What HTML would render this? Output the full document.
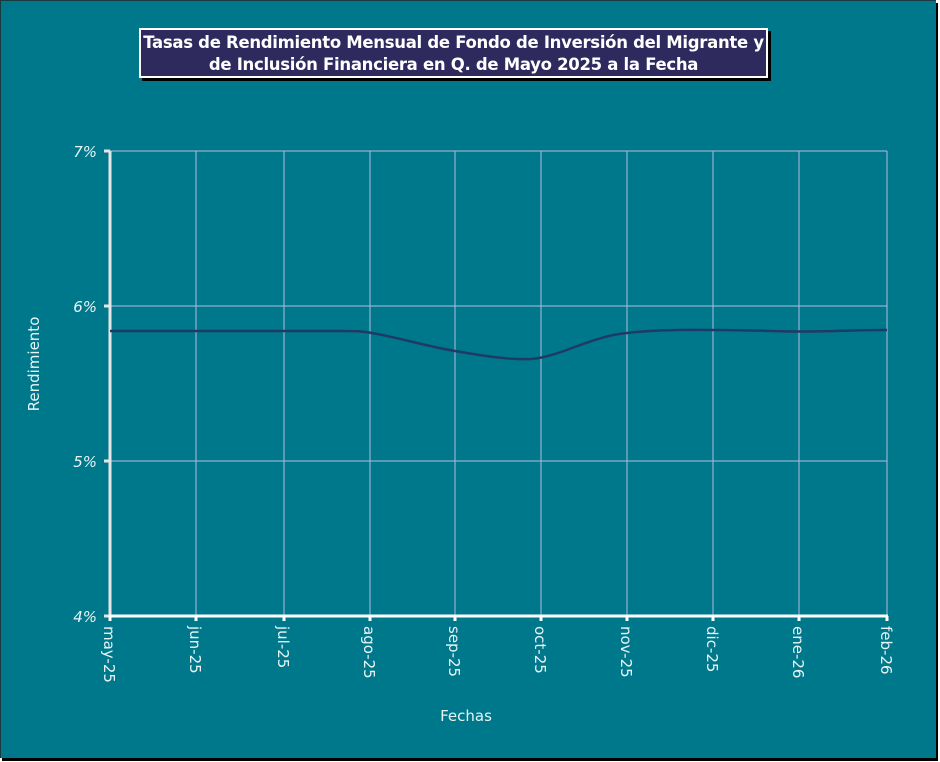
<!DOCTYPE html>
<html><head><meta charset="utf-8"><style>
html,body{margin:0;padding:0;width:940px;height:762px;overflow:hidden;background:#fff}
.frame{position:absolute;left:0;top:0;width:936px;height:758px;background:#00788c;border-left:1px solid #1a3a40;border-top:1px solid #1a3a40;box-sizing:border-box;box-shadow:2px 3px 0 #000}
.title{position:absolute;left:139px;top:28px;width:629px;height:50px;box-sizing:border-box;border:2px solid #fff;background:#2e2a5e;color:#fff;font-family:"DejaVu Sans","Liberation Sans",sans-serif;font-weight:bold;font-size:16.5px;line-height:22px;text-align:center;padding-top:2px;box-shadow:3px 3px 0 #000;letter-spacing:-0.3px}
svg{position:absolute;left:0;top:0}
</style></head><body>
<div class="frame"></div>
<div class="title">Tasas de Rendimiento Mensual de Fondo de Inversión del Migrante y<br>de Inclusión Financiera en Q. de Mayo 2025 a la Fecha</div>
<svg width="940" height="762" font-family="DejaVu Sans, Liberation Sans, sans-serif">
<g stroke="#b0bce4" stroke-width="1">
<line x1="110" y1="151" x2="887" y2="151"/><line x1="110" y1="306" x2="887" y2="306"/><line x1="110" y1="461" x2="887" y2="461"/>
<line x1="196" y1="151" x2="196" y2="616"/><line x1="284" y1="151" x2="284" y2="616"/><line x1="370" y1="151" x2="370" y2="616"/><line x1="455" y1="151" x2="455" y2="616"/><line x1="541" y1="151" x2="541" y2="616"/><line x1="627" y1="151" x2="627" y2="616"/><line x1="713" y1="151" x2="713" y2="616"/><line x1="799" y1="151" x2="799" y2="616"/><line x1="887" y1="151" x2="887" y2="616"/>
</g>
<g stroke="#e6e6e6" stroke-width="3">
<line x1="110" y1="151" x2="110" y2="617"/>
<line x1="104" y1="151" x2="110" y2="151"/><line x1="104" y1="306" x2="110" y2="306"/><line x1="104" y1="461" x2="110" y2="461"/><line x1="104" y1="616" x2="110" y2="616"/>
</g>
<line x1="109" y1="616" x2="888" y2="616" stroke="#fff" stroke-width="3"/>
<g stroke="#fff" stroke-width="3">
<line x1="110" y1="616" x2="110" y2="621"/><line x1="196" y1="616" x2="196" y2="621"/><line x1="284" y1="616" x2="284" y2="621"/><line x1="370" y1="616" x2="370" y2="621"/><line x1="455" y1="616" x2="455" y2="621"/><line x1="541" y1="616" x2="541" y2="621"/><line x1="627" y1="616" x2="627" y2="621"/><line x1="713" y1="616" x2="713" y2="621"/><line x1="799" y1="616" x2="799" y2="621"/><line x1="887" y1="616" x2="887" y2="621"/>
</g>
<path d="M110,331 L340,331 C355,331 362,331 372,333 C400,338 430,347 455,351 C490,357 512,360 532,359 C562,356 592,336 627,333 C660,329 700,330 713,330 C750,330 775,331.5 799,331.5 C830,331.5 860,330 887,330" fill="none" stroke="#1f3a64" stroke-width="2.5"/>
<g fill="#e8f4f4" font-size="15" text-anchor="end" font-style="italic">
<text x="97" y="157">7%</text><text x="97" y="312">6%</text><text x="97" y="467">5%</text><text x="97" y="622">4%</text>
</g>
<g fill="#e8f4f4" font-size="15">
<text transform="translate(104,626) rotate(90)">may-25</text>
<text transform="translate(190,626) rotate(90)">jun-25</text>
<text transform="translate(278,626) rotate(90)">jul-25</text>
<text transform="translate(364,626) rotate(90)">ago-25</text>
<text transform="translate(449,626) rotate(90)">sep-25</text>
<text transform="translate(535,626) rotate(90)">oct-25</text>
<text transform="translate(621,626) rotate(90)">nov-25</text>
<text transform="translate(707,626) rotate(90)">dic-25</text>
<text transform="translate(793,626) rotate(90)">ene-26</text>
<text transform="translate(881,626) rotate(90)">feb-26</text>
<text x="466" y="721" text-anchor="middle">Fechas</text>
<text transform="translate(39,364) rotate(-90)" text-anchor="middle">Rendimiento</text>
</g>
</svg>
</body></html>
